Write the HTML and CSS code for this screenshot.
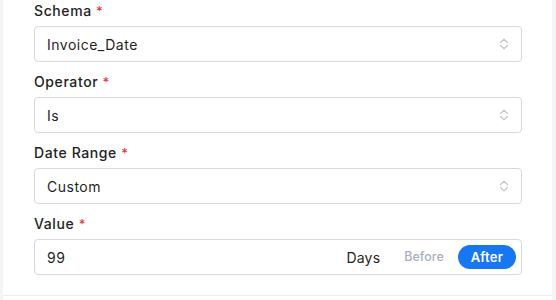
FILE: index.html
```html
<!DOCTYPE html>
<html>
<head>
<meta charset="utf-8">
<link rel="stylesheet" href="styles.css">
</head>
<body>
<div class="panel">
  <div class="form">
    <div class="field">
      <div class="label">Schema <span class="req">*</span></div>
      <div class="input select"><span>Invoice_Date</span>
        <svg class="chev" width="10" height="12" viewBox="0 0 10 12"><path d="M1.5 4.5 L5 1.2 L8.5 4.5 M1.5 7.5 L5 10.8 L8.5 7.5" fill="none" stroke="#c4c4c8" stroke-width="1.2" stroke-linecap="round" stroke-linejoin="round"/></svg>
      </div>
    </div>
    <div class="field">
      <div class="label">Operator <span class="req">*</span></div>
      <div class="input select"><span>Is</span>
        <svg class="chev" width="10" height="12" viewBox="0 0 10 12"><path d="M1.5 4.5 L5 1.2 L8.5 4.5 M1.5 7.5 L5 10.8 L8.5 7.5" fill="none" stroke="#c4c4c8" stroke-width="1.2" stroke-linecap="round" stroke-linejoin="round"/></svg>
      </div>
    </div>
    <div class="field">
      <div class="label">Date Range <span class="req">*</span></div>
      <div class="input select"><span>Custom</span>
        <svg class="chev" width="10" height="12" viewBox="0 0 10 12"><path d="M1.5 4.5 L5 1.2 L8.5 4.5 M1.5 7.5 L5 10.8 L8.5 7.5" fill="none" stroke="#c4c4c8" stroke-width="1.2" stroke-linecap="round" stroke-linejoin="round"/></svg>
      </div>
    </div>
    <div class="field">
      <div class="label">Value <span class="req">*</span></div>
      <div class="input value">
        <span class="num">99</span>
        <span class="unit">Days</span>
        <div class="toggle">
          <span class="opt">Before</span>
          <span class="opt active">After</span>
        </div>
      </div>
    </div>
  </div>
  <div class="footer"></div>
</div>
</body>
</html>
```
FILE: styles.css
```css
html, body {
  margin: 0;
  padding: 0;
}
body {
  background: #f4f5f7;
  font-family: "Inter", "Open Sans", sans-serif;
  font-size: 14px;
  color: #222;
  height: 300px;
  overflow: hidden;
}
.panel {
  margin-left: 3px;
  width: 549px;
  height: 300px;
  background: #fff;
}
.form {
  display: flex;
  flex-direction: column;
  gap: 10px;
  padding: 1px 30px 20px 31px;
  border-bottom: 1px solid #ebebef;
}
.field {
  display: flex;
  flex-direction: column;
  gap: 5px;
}
.label {
  height: 20px;
  line-height: 20px;
  font-weight: 500;
  letter-spacing: 0.6px;
  color: #222;
}
.req {
  color: #e5393f;
  font-size: 13px;
}
.input {
  box-sizing: border-box;
  height: 36px;
  border: 1px solid #d9d9dc;
  border-radius: 4px;
  display: flex;
  align-items: center;
  padding: 0 12px 0 12px;
  letter-spacing: 0.5px;
  color: #1f1f1f;
}
.select {
  justify-content: space-between;
}
.value {
  padding-right: 5px;
}
.num {
  flex: 1;
}
.unit {
  margin-right: 12px;
  letter-spacing: 0.2px;
}
.toggle {
  display: flex;
  gap: 2px;
}
.opt {
  height: 24px;
  line-height: 24px;
  padding: 0 12px;
  border-radius: 12px;
  font-size: 12.5px;
  font-weight: 500;
  color: #abafc2;
  letter-spacing: 0;
}
.opt.active {
  background: #1677f0;
  color: #fff;
  font-size: 13px;
  font-weight: 600;
  padding: 0 13px;
  letter-spacing: 0.2px;
}
```
